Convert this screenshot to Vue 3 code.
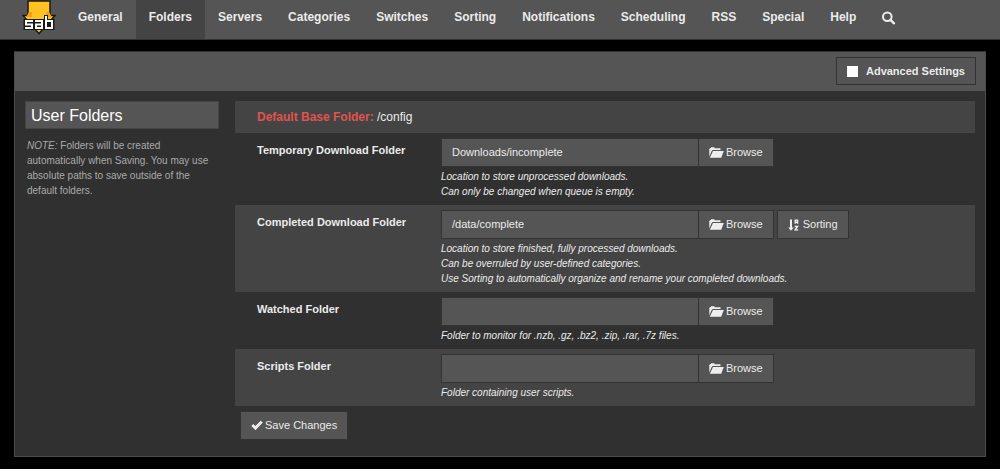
<script setup>
import { ref } from 'vue'

const tabs = ['General', 'Folders', 'Servers', 'Categories', 'Switches', 'Sorting', 'Notifications', 'Scheduling', 'RSS', 'Special', 'Help']
const active = ref('Folders')
const advanced = ref(false)

const folders = ref([
  {
    id: 'download_dir',
    label: 'Temporary Download Folder',
    value: 'Downloads/incomplete',
    hints: ['Location to store unprocessed downloads.', 'Can only be changed when queue is empty.'],
  },
  {
    id: 'complete_dir',
    label: 'Completed Download Folder',
    value: '/data/complete',
    sorting: true,
    hints: [
      'Location to store finished, fully processed downloads.',
      'Can be overruled by user-defined categories.',
      'Use Sorting to automatically organize and rename your completed downloads.',
    ],
  },
  {
    id: 'dirscan_dir',
    label: 'Watched Folder',
    value: '',
    hints: ['Folder to monitor for .nzb, .gz, .bz2, .zip, .rar, .7z files.'],
  },
  {
    id: 'script_dir',
    label: 'Scripts Folder',
    value: '',
    hints: ['Folder containing user scripts.'],
  },
])
</script>

<template>
  <div class="page">
    <nav class="navbar">
      <a class="logo" href="#" aria-label="SABnzbd">
        <svg width="34" height="35" viewBox="0 0 34 35" aria-hidden="true">
          <path d="M6 1H28V15.500H33L17 33.500L1 15.500H6Z" fill="#ffc220" stroke="#1c1a14" stroke-width="1.500" />
          <path d="M7 12H10V17H4Z" fill="#f59e10" />
          <path d="M27 12H24V17H30Z" fill="#f59e10" />
          <path d="M1.500 19H22V15H26V19H32.500V30H1.500Z" fill="#1c1a14" />
          <g fill="none" stroke="#fff" stroke-width="2">
            <path d="M11 21H4V24.500H10V28H3" />
            <path d="M13 21H20V29M21 28H14V24.500H20" />
            <path d="M24 16V28H30V21H24" />
          </g>
        </svg>
      </a>
      <a v-for="tab in tabs" :key="tab" href="#" class="tab" :class="{ active: tab === active }" @click.prevent="active = tab">{{ tab }}</a>
      <a href="#" class="tab search" aria-label="Search">
        <svg width="14" height="14" viewBox="0 0 14 14" aria-hidden="true">
          <circle cx="5.300" cy="5.800" r="4.300" fill="none" stroke="#eee" stroke-width="2" />
          <path d="M8.400 8.900L12 12.300" stroke="#eee" stroke-width="2.400" stroke-linecap="round" />
        </svg>
      </a>
    </nav>

    <main class="panel">
      <header class="panel-head">
        <label class="advanced" for="advanced">
          <input id="advanced" v-model="advanced" type="checkbox" />
          Advanced Settings
        </label>
      </header>

      <div class="body">
        <aside class="side">
          <h3>User Folders</h3>
          <p><i>NOTE:</i> Folders will be created automatically when Saving. You may use absolute paths to save outside of the default folders.</p>
        </aside>

        <form class="settings" @submit.prevent>
          <div class="base"><b>Default Base Folder:</b> /config</div>
          <div v-for="f in folders" :key="f.id" class="row">
            <label :for="f.id">{{ f.label }}</label>
            <div class="field">
              <div class="controls">
                <div class="group">
                  <input :id="f.id" v-model="f.value" type="text" />
                  <button type="button" class="btn browse">
                    <svg width="15" height="11" viewBox="0 0 15 11" aria-hidden="true">
                      <path d="M0.300 9.500V2L1.300 1H2V0.300H5.500V1.200H11.500V3H3.800L2.600 4Z" fill="#eee" />
                      <path d="M4 4H14.800L12.200 10.800H0.800Z" fill="#eee" />
                    </svg>
                    Browse
                  </button>
                </div>
                <button v-if="f.sorting" type="button" class="btn sorting">
                  <svg width="11" height="12" viewBox="0 0 11 12" aria-hidden="true">
                    <path d="M2 0.500H4V8.500H5.800L3 11.700L0.200 8.500H2Z" fill="#eee" />
                    <path d="M7.200 4.800V1.100H9.600V4.800M7.200 3.200H9.600" fill="none" stroke="#eee" stroke-width="1.400" />
                    <path d="M6.700 7.500H9.600L7.200 10.900H10.200" fill="none" stroke="#eee" stroke-width="1.400" />
                  </svg>
                  Sorting
                </button>
              </div>
              <p class="hint"><span v-for="h in f.hints" :key="h">{{ h }}</span></p>
            </div>
          </div>
          <button type="submit" class="btn save">
            <svg width="12" height="11" viewBox="0 0 12 11" aria-hidden="true">
              <path d="M0.300 6L2.300 4L4.400 6L9.700 0.700L11.800 2.600L4.500 10.200Z" fill="#eee" />
            </svg>
            Save Changes
          </button>
        </form>
      </div>
    </main>
  </div>
</template>

<style>
body {
  background: #000;
}
</style>

<style scoped>
.page {
  font: 11px/15px "Liberation Sans", Arial, sans-serif;
  color: #ebebeb;
}
.page * {
  box-sizing: border-box;
}
.navbar {
  display: flex;
  min-height: 40px;
  padding-left: 22px;
  background: #555;
  border-bottom: 1px solid #333;
}
.logo {
  width: 43px;
  height: 39px;
}
.logo svg {
  display: block;
}
.tab {
  padding: 10px 13px 14px;
  font-size: 12px;
  font-weight: bold;
  color: #ebebeb;
  text-decoration: none;
}
.tab.active {
  background: #444;
}
.search svg {
  display: block;
  margin-top: 1px;
}
.panel {
  margin: 11px 14px 12px;
  background: #303030;
  border: 1px solid #4c4c4c;
  border-top-color: #333;
}
.panel-head {
  display: flex;
  justify-content: flex-end;
  padding: 5px 9px 6px;
  background: #555;
}
.advanced {
  display: flex;
  align-items: center;
  gap: 8px;
  height: 28px;
  padding: 0 10px;
  border: 1px solid #333;
  font-weight: bold;
}
.advanced input {
  appearance: none;
  width: 11px;
  height: 11px;
  margin: 0;
  background: #fff;
}
.advanced input:checked {
  background: #e0534f;
}
.body {
  display: grid;
  grid-template-columns: 194px 1fr;
  gap: 16px;
  padding: 10px 10px 11px;
}
.side h3 {
  margin: 0;
  padding: 5px 5px 3px;
  background: #555;
  border: 1px solid #444;
  font-size: 16px;
  line-height: 18px;
  font-weight: normal;
  color: #fff;
}
.side p {
  margin: 9px 2px;
  font-size: 10px;
  color: #aaa;
}
.base {
  padding: 9px 22px 8px;
  background: #444;
  font-size: 12px;
}
.base b {
  color: #e0534f;
}
.row {
  display: grid;
  grid-template-columns: 184px 1fr;
  padding: 5px 22px 6px;
}
.row:nth-child(odd) {
  background: #444;
}
.row > label {
  padding-top: 5px;
  font-weight: bold;
}
.controls {
  display: flex;
  flex-wrap: wrap;
  gap: 3px;
}
.group {
  display: flex;
}
.group input {
  width: 258px;
  min-width: 0;
  height: 29px;
  padding: 0 10px 2px;
  border: 1px solid #333;
  border-radius: 0;
  background: #555;
  color: #ebebeb;
  font: inherit;
}
.btn {
  display: flex;
  align-items: center;
  justify-content: center;
  gap: 2px;
  height: 29px;
  padding: 0 10px;
  border: 1px solid #333;
  background: #555;
  color: #ebebeb;
  font: inherit;
}
.browse {
  margin-left: -1px;
}
.sorting {
  gap: 4px;
}
.hint {
  margin: 2px 0 0;
  font-size: 10px;
  font-style: italic;
}
.hint span {
  display: block;
}
.save {
  margin: 5px;
}
</style>
